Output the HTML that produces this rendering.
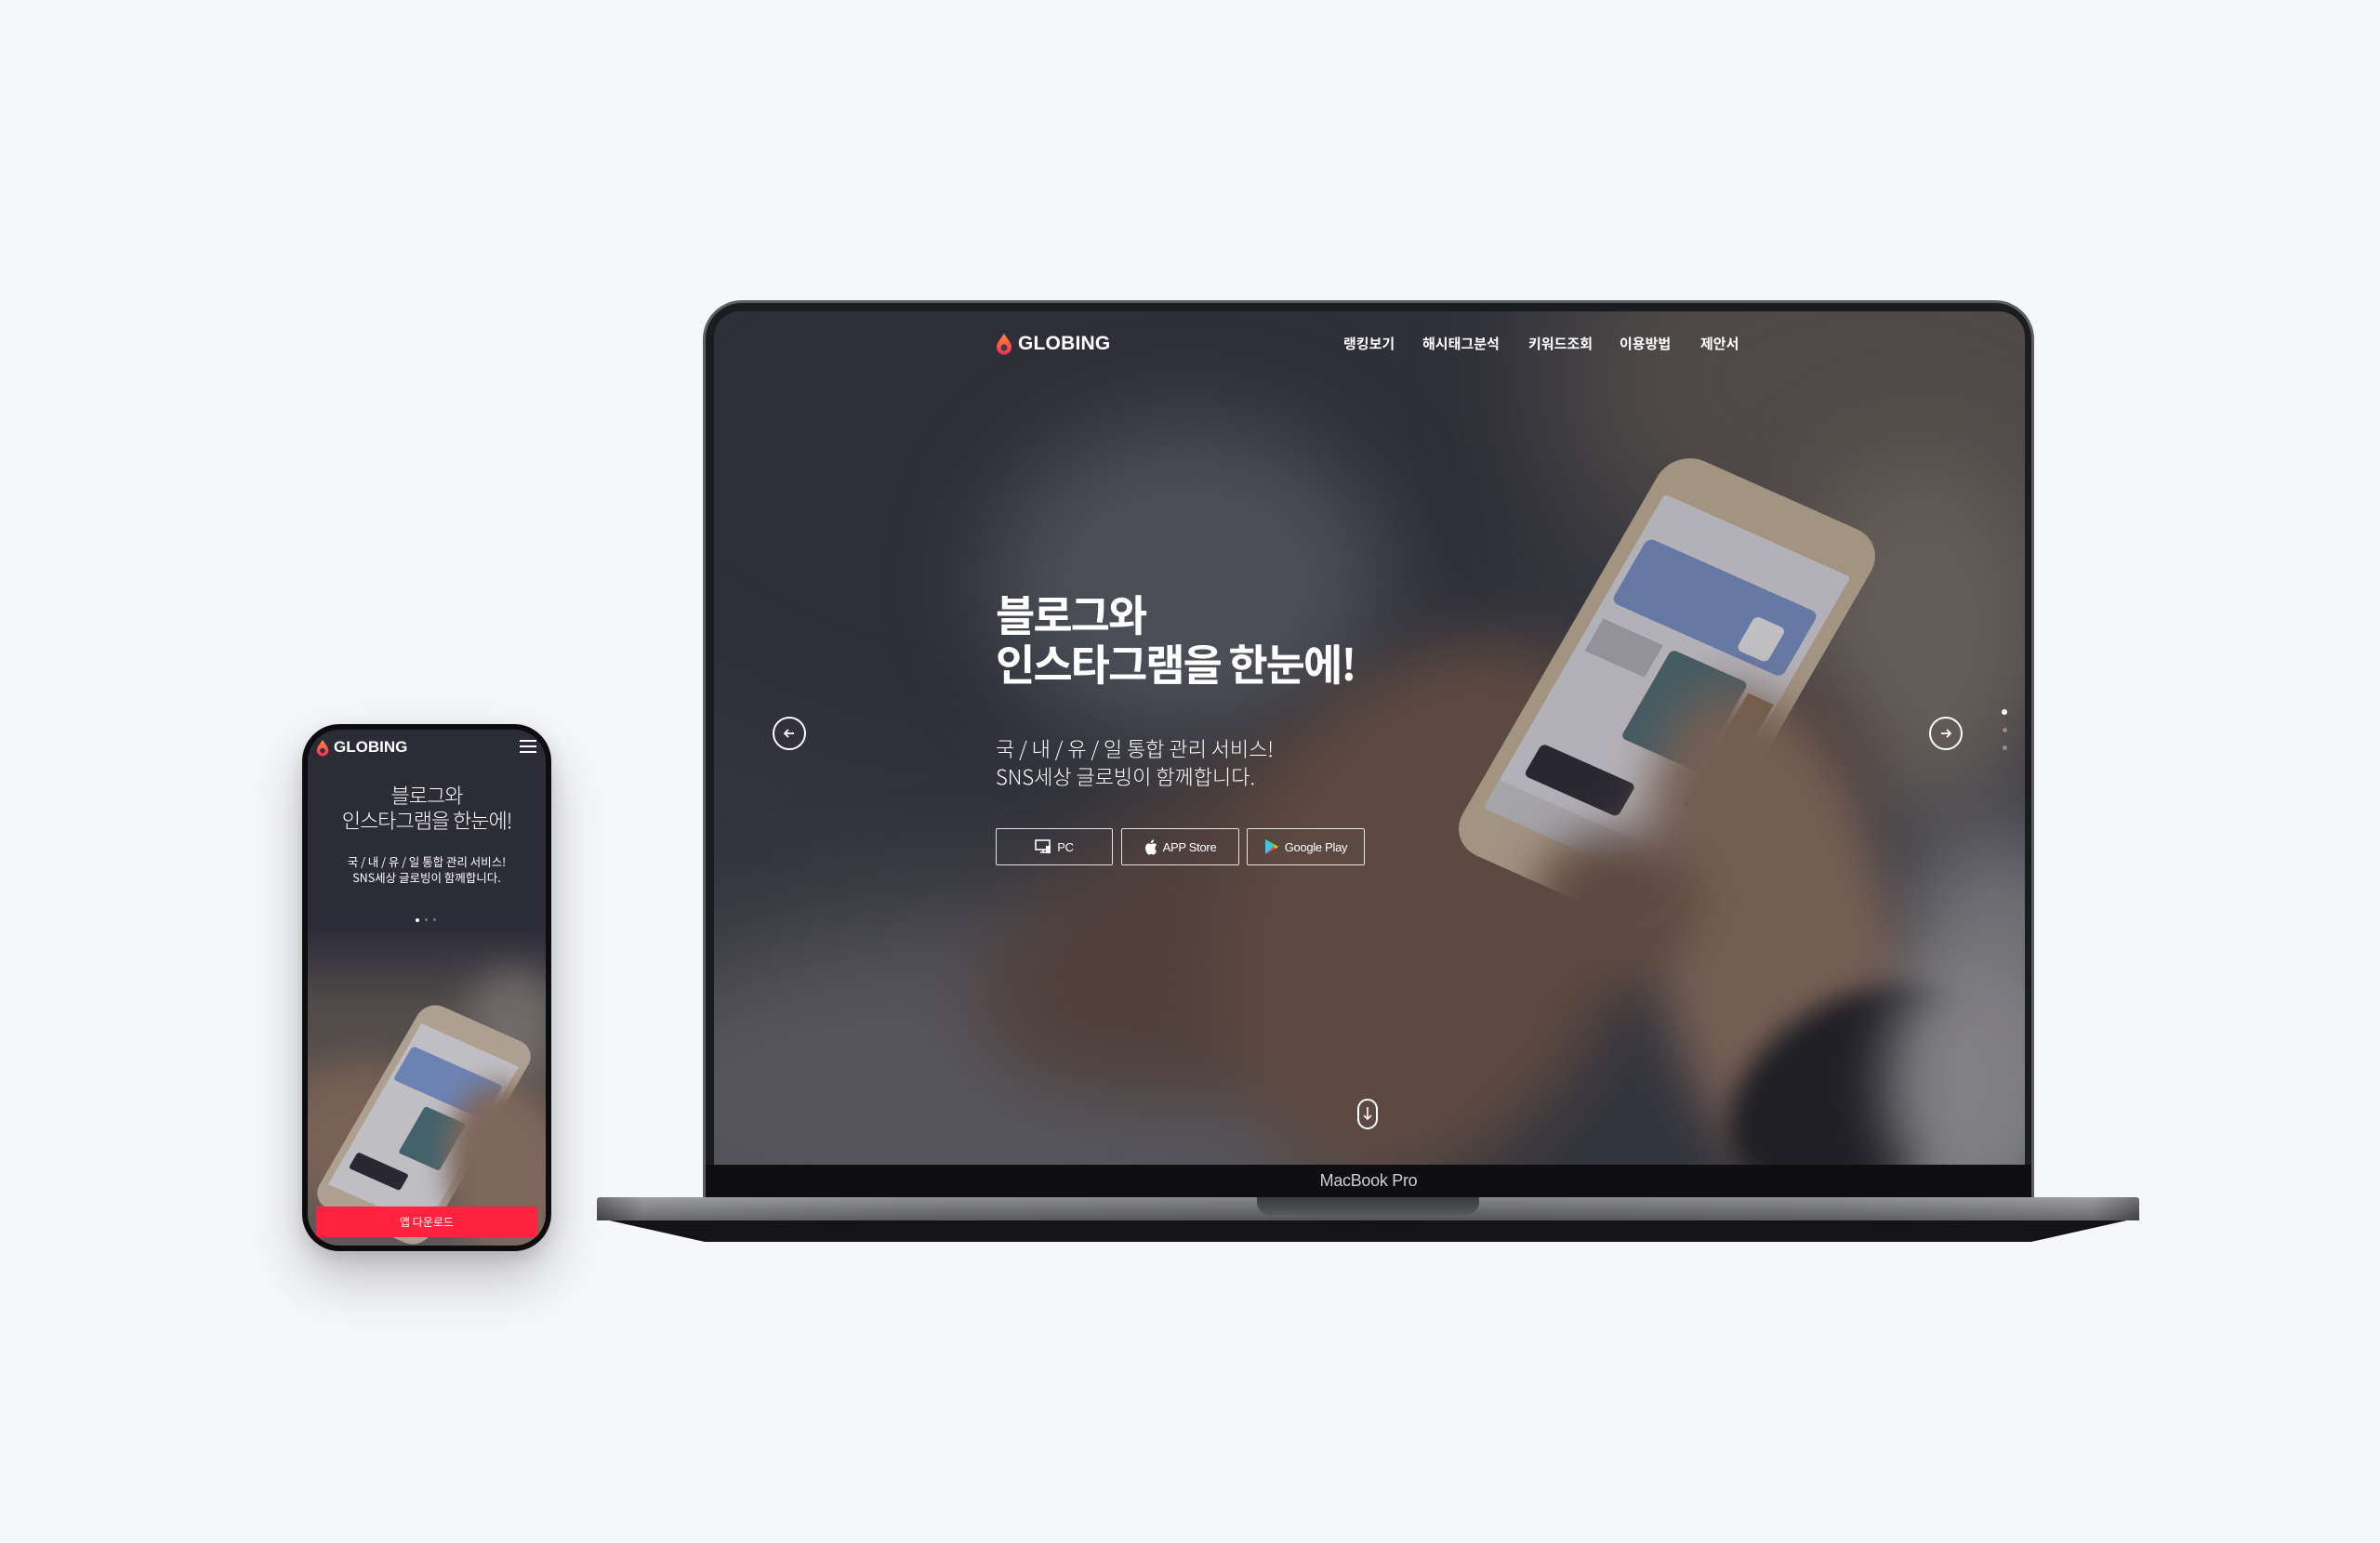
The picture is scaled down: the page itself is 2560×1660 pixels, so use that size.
<!DOCTYPE html>
<html><head><meta charset="utf-8"><style>
*{margin:0;padding:0;box-sizing:border-box}
body{width:2560px;height:1660px;background:#f6f7f9;position:relative;overflow:hidden;font-family:"Liberation Sans","Noto Sans CJK KR",sans-serif}
.abs{position:absolute}
.bezel{left:756px;top:323px;width:1432px;height:966px;border-radius:42px 42px 0 0;background:#1b1c1f;border:3px solid #5d5f64;border-bottom:none}
.screen{left:768px;top:335px;width:1410px;height:919px;border-radius:28px 28px 0 0;overflow:hidden;background:#3a3b44}
.blob{position:absolute;border-radius:50%}
.nav span{position:absolute;top:359px;color:#fff;font-size:15px;font-weight:bold;font-family:"Noto Sans CJK KR",sans-serif}
.btn{position:absolute;top:891px;height:40px;border:1.5px solid rgba(255,255,255,.85);border-radius:2px;color:#fff;font-size:13px;display:flex;align-items:center;justify-content:center;gap:6px;letter-spacing:-.3px}
.circ{position:absolute;width:36px;height:36px;border:2px solid #fff;border-radius:50%}
</style></head><body>

<div class="abs bezel"></div>
<div class="abs screen">
  <div class="blob" style="left:-200px;top:-200px;width:1100px;height:700px;background:#33343d;filter:blur(60px)"></div>
  <div class="blob" style="left:300px;top:120px;width:420px;height:340px;background:#5a5d66;filter:blur(50px)"></div>
  <div class="blob" style="left:900px;top:-150px;width:700px;height:450px;background:#5e5751;filter:blur(70px)"></div>
  <div class="blob" style="left:1150px;top:150px;width:300px;height:400px;background:#776e66;filter:blur(50px)"></div>
  <div class="blob" style="left:1250px;top:550px;width:260px;height:420px;background:#8b8a8e;filter:blur(50px)"></div>
  <div class="blob" style="left:-150px;top:650px;width:900px;height:400px;background:#66656b;filter:blur(60px)"></div>
  <div class="blob" style="left:260px;top:420px;width:1000px;height:380px;background:#5e4a42;filter:blur(40px);transform:rotate(-18deg)"></div>
  <div class="blob" style="left:560px;top:350px;width:420px;height:600px;background:#6e5548;filter:blur(35px);transform:rotate(20deg)"></div>
  <div class="abs" style="left:900px;top:165px;width:250px;height:490px;transform:rotate(30deg) skewY(-6deg);background:#c8b59c;border-radius:36px">
    <div class="abs" style="left:16px;top:50px;width:218px;height:390px;background:#dcdadf;border-radius:4px;overflow:hidden">
      <div class="abs" style="left:8px;top:50px;width:200px;height:80px;background:#7a92c8;border-radius:8px"></div>
      <div class="abs" style="left:150px;top:80px;width:36px;height:42px;background:#eee;border-radius:6px"></div>
      <div class="abs" style="left:90px;top:150px;width:90px;height:110px;background:#4f6d74;border-radius:6px"></div>
      <div class="abs" style="left:10px;top:150px;width:70px;height:40px;background:#b5b3b9"></div>
      <div class="abs" style="left:20px;top:300px;width:110px;height:40px;background:#2c2a34;border-radius:6px"></div>
      <div class="abs" style="left:185px;top:160px;width:30px;height:140px;background:#8b6f3e"></div>
      <div class="abs" style="left:0;top:355px;width:218px;height:35px;background:#cbc9cd"></div>
    </div>
  </div>
  <div class="blob" style="left:1010px;top:400px;width:260px;height:560px;background:#8c7060;filter:blur(25px);transform:rotate(-12deg)"></div>
  <div class="blob" style="left:880px;top:560px;width:180px;height:150px;background:#6f5649;filter:blur(25px)"></div>
  <div class="blob" style="left:1080px;top:740px;width:300px;height:200px;background:#1f1f24;filter:blur(14px);transform:rotate(-30deg)"></div>
  <div class="blob" style="left:1260px;top:700px;width:180px;height:260px;background:#9d9b9f;filter:blur(30px)"></div>
  <div class="abs" style="inset:0;background:rgba(30,30,40,.22)"></div>
</div>

<div class="abs" style="left:1071px;top:358px;display:flex;align-items:center;gap:6px">
  <svg width="18" height="24" viewBox="0 0 18 24"><defs><linearGradient id="g1" x1="0" y1="0" x2="0" y2="1"><stop offset="0" stop-color="#ff8a3a"/><stop offset="1" stop-color="#ff2d55"/></linearGradient></defs><path d="M9 1 C5 7 1 11 1 15.5 A8 8 0 0 0 17 15.5 C17 11 13 7 9 1Z" fill="url(#g1)"/><circle cx="9" cy="16" r="3.5" fill="#3a3b44"/></svg>
  <span style="color:#fff;font-weight:bold;font-size:21px;letter-spacing:.2px">GLOBING</span>
</div>
<div class="nav">
  <span style="left:1445px">랭킹보기</span>
  <span style="left:1530px">해시태그분석</span>
  <span style="left:1644px">키워드조회</span>
  <span style="left:1742px">이용방법</span>
  <span style="left:1829px">제안서</span>
</div>
<div class="abs" style="left:1071px;top:634px;color:#fff;font-family:'Noto Sans CJK KR',sans-serif;font-weight:bold;font-size:46px;line-height:53px;letter-spacing:-2px">블로그와<br>인스타그램을 한눈에!</div>
<div class="abs" style="left:1071px;top:790px;color:#fff;font-family:'Noto Sans CJK KR',sans-serif;font-size:22px;line-height:30px;letter-spacing:0;font-weight:300;white-space:pre">국 / 내 / 유 / 일 통합 관리 서비스!
SNS세상 글로빙이 함께합니다.</div>
<div class="btn" style="left:1071px;width:126px"><svg width="18" height="16" viewBox="0 0 18 16"><rect x="1" y="1" width="15" height="10" fill="none" stroke="#fff" stroke-width="1.6"/><path d="M6 14h6M9 11v3" stroke="#fff" stroke-width="1.6"/><rect x="12" y="7" width="5" height="8" fill="#fff"/></svg>PC</div>
<div class="btn" style="left:1206px;width:127px"><svg width="14" height="17" viewBox="0 0 14 17"><path d="M11.5 9c0-2 1.6-3 1.7-3-1-1.4-2.4-1.6-2.9-1.6-1.2-.1-2.4.7-3 .7s-1.6-.7-2.6-.7C3.3 4.4 1 5.7 1 9.2c0 3.3 2.300 7.3 4 7.3.8 0 1.3-.6 2.4-.6s1.4.6 2.4.6c1.6 0 2.8-2.8 3.2-4-1.7-.8-1.5-2.5-1.5-3.500zM9.3 3c.6-.8 1-1.8.9-2.8-.9 0-1.9.6-2.5 1.3-.5.6-1 1.6-.9 2.6 1 .1 1.9-.4 2.5-1.1z" fill="#fff"/></svg>APP Store</div>
<div class="btn" style="left:1341px;width:127px"><svg width="16" height="18" viewBox="0 0 16 18"><path d="M1 1l9 8-9 8z" fill="#33c8f0"/><path d="M1 1l11 6-2 2z" fill="#3ddc84"/><path d="M1 17l11-6-2-2z" fill="#ff3a44"/><path d="M12 7l3 2-3 2-2-2z" fill="#ffc400"/></svg>Google Play</div>
<div class="circ" style="left:831px;top:771px"></div>
<svg class="abs" style="left:839px;top:779px" width="20" height="20" viewBox="0 0 20 20"><path d="M15 10H5M9 6l-4 4 4 4" stroke="#fff" stroke-width="1.8" fill="none"/></svg>
<div class="circ" style="left:2075px;top:771px"></div>
<svg class="abs" style="left:2083px;top:779px" width="20" height="20" viewBox="0 0 20 20"><path d="M5 10h10M11 6l4 4-4 4" stroke="#fff" stroke-width="1.8" fill="none"/></svg>
<div class="abs" style="left:2153px;top:763px;width:6px;height:6px;border-radius:50%;background:#fff"></div>
<div class="abs" style="left:2154px;top:783px;width:5px;height:5px;border-radius:50%;background:rgba(255,255,255,.35)"></div>
<div class="abs" style="left:2154px;top:802px;width:5px;height:5px;border-radius:50%;background:rgba(255,255,255,.35)"></div>
<div class="abs" style="left:1460px;top:1182px;width:22px;height:33px;border:2px solid #fff;border-radius:11px"></div>
<svg class="abs" style="left:1464px;top:1188px" width="14" height="20" viewBox="0 0 14 20"><path d="M7 3v13M3 12l4 4 4-4" stroke="#fff" stroke-width="1.6" fill="none"/></svg>

<div class="abs" style="left:756px;top:1253px;width:1432px;height:35px;background:#0f0f11;border-left:3px solid #5d5f64;border-right:3px solid #5d5f64"></div>
<div class="abs" style="left:756px;top:1260px;width:1432px;text-align:center;color:#cfcfd2;font-size:18px;letter-spacing:-.3px">MacBook Pro</div>
<div class="abs" style="left:642px;top:1310px;width:1659px;height:26px;background:#141416;clip-path:polygon(0 0,100% 0,93% 100%,7% 100%)"></div>
<div class="abs" style="left:642px;top:1288px;width:1659px;height:25px;border-radius:3px 3px 0 0;background:linear-gradient(90deg,#55565a 0%,#8c8d91 3%,#7a7b7f 20%,#6d6e72 50%,#7a7b7f 80%,#8c8d91 97%,#55565a 100%)"></div>
<div class="abs" style="left:642px;top:1288px;width:1659px;height:25px;background:linear-gradient(180deg,rgba(255,255,255,.15),rgba(0,0,0,.25))"></div>
<div class="abs" style="left:1352px;top:1288px;width:239px;height:19px;border-radius:0 0 14px 14px;background:linear-gradient(180deg,#3a3b3e,#56575b)"></div>

<div class="abs" style="left:325px;top:779px;width:268px;height:567px;border-radius:40px;background:#0d0d0f;box-shadow:0 30px 60px rgba(0,0,0,.22),0 8px 20px rgba(0,0,0,.12)"></div>
<div class="abs" style="left:331px;top:785px;width:256px;height:555px;border-radius:34px;overflow:hidden;background:#2f2f3d">
  <div class="abs" style="left:0;top:210px;width:256px;height:345px;background:linear-gradient(180deg,#2f2f3d 0%,#5a5450 25%,#6d5f55 60%,#6a6262 100%)"></div>
  <div class="blob" style="left:-40px;top:360px;width:200px;height:160px;background:#8a6e5e;filter:blur(20px)"></div>
  <div class="blob" style="left:170px;top:260px;width:100px;height:120px;background:#807875;filter:blur(20px)"></div>
  <div class="abs" style="left:60px;top:300px;width:130px;height:250px;transform:rotate(30deg) skewY(-6deg);background:#c8b8a4;border-radius:20px">
    <div class="abs" style="left:8px;top:26px;width:114px;height:200px;background:#dcdbdf">
      <div class="abs" style="left:4px;top:26px;width:106px;height:42px;background:#7b95cc;border-radius:4px"></div>
      <div class="abs" style="left:48px;top:80px;width:48px;height:58px;background:#4a6f78;border-radius:3px"></div>
      <div class="abs" style="left:10px;top:155px;width:60px;height:20px;background:#2c2a34;border-radius:3px"></div>
    </div>
  </div>
  <div class="blob" style="left:150px;top:380px;width:130px;height:200px;background:#8f7566;filter:blur(14px);transform:rotate(-12deg)"></div>
  <div class="abs" style="left:0;top:0;width:256px;height:555px;background:rgba(30,30,40,.15)"></div>
  <div class="abs" style="left:9px;top:513px;width:238px;height:33px;border-radius:3px;background:#ff233f;color:#fff;font-size:12px;text-align:center;line-height:33px;font-family:'Noto Sans CJK KR',sans-serif">앱 다운로드</div>
</div>
<div class="abs" style="left:340px;top:794px;display:flex;align-items:center;gap:5px">
  <svg width="14" height="19" viewBox="0 0 18 24"><path d="M9 1 C5 7 1 11 1 15.5 A8 8 0 0 0 17 15.5 C17 11 13 7 9 1Z" fill="url(#g1)"/><circle cx="9" cy="16" r="3.5" fill="#2f2f3d"/></svg>
  <span style="color:#fff;font-weight:bold;font-size:17px">GLOBING</span>
</div>
<div class="abs" style="left:559px;top:796px;width:18px;height:2px;background:#fff;box-shadow:0 6px 0 #fff,0 12px 0 #fff"></div>
<div class="abs" style="left:331px;top:842px;width:256px;text-align:center;color:#fff;font-family:'Noto Sans CJK KR',sans-serif;font-weight:300;font-size:22px;line-height:27px;letter-spacing:-1px">블로그와<br>인스타그램을 한눈에!</div>
<div class="abs" style="left:331px;top:918px;width:256px;text-align:center;color:#fff;font-family:'Noto Sans CJK KR',sans-serif;font-size:12.5px;line-height:17px;letter-spacing:0;white-space:pre">국 / 내 / 유 / 일 통합 관리 서비스!
SNS세상 글로빙이 함께합니다.</div>
<div class="abs" style="left:447px;top:988px;width:4px;height:4px;border-radius:50%;background:#fff"></div>
<div class="abs" style="left:457px;top:988px;width:3px;height:3px;border-radius:50%;background:#777"></div>
<div class="abs" style="left:466px;top:988px;width:3px;height:3px;border-radius:50%;background:#777"></div>
</body></html>
